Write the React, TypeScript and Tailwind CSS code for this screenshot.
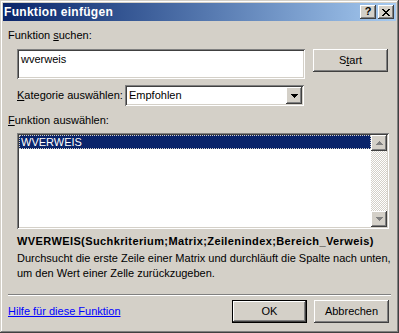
import React from "react";

const raised =
  "shadow-[inset_-1px_-1px_#404040,inset_1px_1px_#ffffff,inset_-2px_-2px_#808080,inset_2px_2px_#d4d0c8]";
const sunken =
  "shadow-[inset_1px_1px_#808080,inset_-1px_-1px_#ffffff,inset_2px_2px_#404040,inset_-2px_-2px_#d4d0c8]";

const ArrowDown = ({ color = "#000000" }: { color?: string }) => (
  <svg width="7" height="4" viewBox="0 0 7 4">
    <path d="M0 0h7v1H0zM1 1h5v1H1zM2 2h3v1H2zM3 3h1v1H3z" fill={color} />
  </svg>
);

const ArrowUp = ({ color = "#000000" }: { color?: string }) => (
  <svg width="7" height="4" viewBox="0 0 7 4">
    <path d="M3 0h1v1H3zM2 1h3v1H2zM1 2h5v1H1zM0 3h7v1H0z" fill={color} />
  </svg>
);

const Button = ({
  children,
  isDefault,
}: {
  children: React.ReactNode;
  isDefault?: boolean;
}) => (
  <div
    className={`flex h-[23px] w-[75px] items-center justify-center bg-[#d4d0c8] text-black ${
      isDefault
        ? "border border-black shadow-[inset_-1px_-1px_#404040,inset_1px_1px_#ffffff,inset_-2px_-2px_#808080]"
        : raised
    }`}
  >
    {children}
  </div>
);

const App = () => {
  return (
    <div
      className="h-[333px] w-[399px] overflow-hidden bg-[#d4d0c8] p-[3px] text-[11px] leading-[13px] text-black shadow-[inset_-1px_-1px_#404040,inset_1px_1px_#d4d0c8,inset_-2px_-2px_#808080,inset_2px_2px_#ffffff]"
      style={{ fontFamily: '"Liberation Sans", Arial, sans-serif' }}
    >
      {/* title bar */}
      <div className="flex h-[18px] items-center justify-between bg-linear-to-r from-[#0a246a] to-[#a6caf0] pl-[1px] pr-[2px]">
        <span className="text-[12px] font-bold tracking-[0.3px] text-white">Funktion einfügen</span>
        <div className="flex gap-[2px]">
          <div className={`flex h-[14px] w-[16px] items-center justify-center bg-[#d4d0c8] ${raised}`}>
            <span className="mt-[-1px] text-[11px] font-bold leading-none">?</span>
          </div>
          <div className={`flex h-[14px] w-[16px] items-center justify-center bg-[#d4d0c8] ${raised}`}>
            <svg width="8" height="7" viewBox="0 0 8 7">
              <path
                d="M0 0h2v1H0zM6 0h2v1H6zM1 1h2v1H1zM5 1h2v1H5zM2 2h4v1H2zM3 3h2v1H3zM2 4h4v1H2zM1 5h2v1H1zM5 5h2v1H5zM0 6h2v1H0zM6 6h2v1H6z"
                fill="#000"
              />
            </svg>
          </div>
        </div>
      </div>

      <div className="px-[5px]">
        <div className="mt-[8px]">
          Funktion <span className="underline">s</span>uchen:
        </div>

        <div className="mt-[7px] flex items-start justify-between pl-[9px] pr-[3px]">
          <div className={`h-[30px] w-[288px] bg-white px-[4px] pt-[4px] ${sunken}`}>wverweis</div>
          <Button>
            S<span className="underline">t</span>art
          </Button>
        </div>

        <div className="mt-[6px] flex items-center pl-[9px]">
          <span className="w-[108px]">
            <span className="underline">K</span>ategorie auswählen:
          </span>
          <div className={`flex h-[21px] w-[179px] items-center justify-between bg-white pl-[4px] pr-[2px] ${sunken}`}>
            <span>Empfohlen</span>
            <div className={`flex h-[17px] w-[16px] items-center justify-center bg-[#d4d0c8] ${raised}`}>
              <ArrowDown />
            </div>
          </div>
        </div>

        <div className="mt-[8px]">
          <span className="underline">F</span>unktion auswählen:
        </div>

        <div className={`ml-[9px] mt-[6px] flex h-[96px] w-[372px] bg-white p-[2px] ${sunken}`}>
          <div className="flex-1">
            <div className="h-[14px] border border-dotted border-[#d4d0c8] bg-[#0a246a] px-[1px] leading-[12px] text-white">
              WVERWEIS
            </div>
          </div>
          <div className="flex w-[16px] flex-col bg-[repeating-conic-gradient(#d4d0c8_0%_25%,#ffffff_0%_50%)] bg-[length:2px_2px]">
            <div className={`flex h-[16px] items-center justify-center bg-[#d4d0c8] ${raised}`}>
              <ArrowUp color="#808080" />
            </div>
            <div className="flex-1" />
            <div className={`flex h-[16px] items-center justify-center bg-[#d4d0c8] ${raised}`}>
              <ArrowDown color="#808080" />
            </div>
          </div>
        </div>

        <div className="mt-[6px] pl-[9px] font-bold tracking-[0.4px]">
          WVERWEIS(Suchkriterium;Matrix;Zeilenindex;Bereich_Verweis)
        </div>
        <div className="mt-[3px] pl-[9px] leading-[15px]">
          Durchsucht die erste Zeile einer Matrix und durchläuft die Spalte nach unten,
          <br />
          um den Wert einer Zelle zurückzugeben.
        </div>

        <div className="mt-[13px] border-t border-b border-t-[#808080] border-b-white" />

        <div className="mt-[4px] flex items-center justify-between pr-[2px]">
          <span className="text-[#0000ff] underline">Hilfe für diese Funktion</span>
          <div className="flex gap-[7px]">
            <Button isDefault>OK</Button>
            <Button>Abbrechen</Button>
          </div>
        </div>
      </div>
    </div>
  );
};

export default App;
